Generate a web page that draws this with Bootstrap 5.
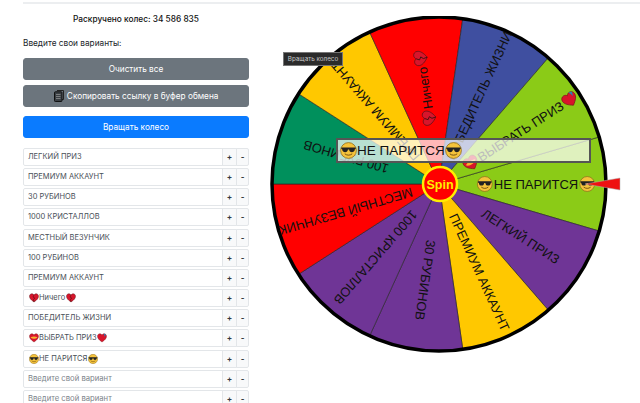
<!DOCTYPE html>
<html lang="ru">
<head>
    <meta charset="UTF-8">
    <meta name="viewport" content="width=device-width, initial-scale=1.0">
    <title>Колесо фортуны</title>
    <link href="https://cdn.jsdelivr.net/npm/bootstrap@5.3.0/dist/css/bootstrap.min.css" rel="stylesheet">
    <style>
        html, body { overflow: hidden; height: 403px; }
        body { font-family: Inter, "Liberation Sans", sans-serif; font-size: 8.25px; color: #212529; }
        .page-wrap { padding-left: 23px; }
        .top-rule { border-top: 2px solid #eceef0; margin-top: 2px; }
        .left-col { width: 226px; flex: none; }
        .spin-count { font-size: 8.3px; font-weight: 500; margin-top: 9px; height: 12px; line-height: 12px; color: #111; }
        .enter-label { margin-top: 12px; height: 12px; line-height: 12px; }
        .wide-btn { font-size: 8.25px; height: 22px; padding: 0; border-radius: 3px; line-height: 20px; display: block; }
        .wide-btn svg { vertical-align: -3px; margin-right: 1px; }
        .clear-btn { margin-top: 9px; }
        .copy-btn { margin-top: 5px; }
        .start-btn { margin-top: 9px; background: #0a7bff; border-color: #0a7bff; }
        .choice-list { margin-top: 10px; }
        .choice-row { height: 18px; margin-bottom: 2.17px; }
        .choice-row .form-control { font-size: 7.7px; height: 18px; min-height: 0; padding: 0 4px; border-radius: 2px 0 0 2px; border-color: #e3e6e9; border-width: 1px; color: #495057; }
        .choice-row .form-control::placeholder { color: #7d848b; }
        .choice-row .btn { font-size: 8px; font-weight: 700; padding: 0; line-height: 16px; background: #f8f9fa; border-color: #e3e6e9; color: #343a40; }
        .choice-row .plus-btn { width: 15px; }
        .choice-row .minus-btn { width: 13px; border-radius: 0 2px 2px 0; }
        .choice-box { position: relative; flex: 1 1 auto; min-width: 0; }
        .choice-label { position: absolute; left: 5px; top: 0; height: 18px; line-height: 18px; font-size: 7.5px; color: #495057; display: flex; align-items: center; pointer-events: none; }
        .choice-label svg { margin: 0 .5px; }
        .wheel-stage { position: relative; width: 352px; height: 345px; margin-left: 21px; margin-top: 12px; flex: none; }
        .wheel-stage svg.wheel-svg { display: block; }
        .wheel-text { font-family: "Liberation Sans", sans-serif; font-size: 13px; fill: #111; }
        .spin-text { font-family: "Liberation Sans", sans-serif; font-size: 12.5px; font-weight: 700; fill: #ffee00; }
        .result-box { position: absolute; left: 66px; top: 122px; width: 255px; height: 25px; border: 2px solid #555; background: rgba(255,255,255,.72); font-family: "Liberation Sans", sans-serif; font-size: 13.5px; line-height: 21px; color: #111; display: flex; align-items: center; padding-left: 2px; }
        .native-tip { position: absolute; left: 283px; top: 52px; width: 60px; height: 14px; background: #2b2b2b; border: 1px solid #767676; color: #c8c8c8; font-size: 6.3px; line-height: 12px; text-align: center; white-space: nowrap; }
    </style>
</head>
<body>
    <div class="page-wrap">
        <div class="top-rule"></div>
        <div class="d-flex">
            <div class="left-col">
                <div class="spin-count text-center">Раскручено колес: 34 586 835</div>
                <div class="enter-label">Введите свои варианты:</div>
                <button class="btn btn-secondary wide-btn w-100 clear-btn" type="button">Очистить все</button>
                <button class="btn btn-secondary wide-btn w-100 copy-btn" type="button">
                    <svg width="10" height="12" viewBox="0 0 10 12"><path d="M3 .5h6.500v9H8" fill="none" stroke="#222"/><rect x=".5" y="1.800" width="7.500" height="9.700" rx=".8" fill="#3a3f44" stroke="#111"/><path d="M2 4.500h4.500M2 6.500h4.500M2 8.500h4.500" stroke="#999" stroke-width=".7"/></svg>
                    Скопировать ссылку в буфер обмена</button>
                <button class="btn btn-primary wide-btn w-100 start-btn" type="button">Вращать колесо</button>
                <div id="choices" class="choice-list"></div>
            </div>
            <div class="wheel-stage">
                <svg class="wheel-svg" id="wheel" width="352" height="345" viewBox="0 0 352 345"></svg>
                <div class="result-box"><svg width="17" height="17" viewBox="0 0 20 20"><use href="#emoji-cool"/></svg>НЕ ПАРИТСЯ<svg width="17" height="17" viewBox="0 0 20 20"><use href="#emoji-cool"/></svg></div>
            </div>
        </div>
    </div>
    <div class="native-tip">Вращать колесо</div>

    <svg width="0" height="0" class="position-absolute">
        <defs>
            <g id="emoji-cool">
                <circle cx="10" cy="10" r="9.300" fill="#f5c33b" stroke="#8a6a1a" stroke-width=".9"/>
                <path d="M1.500 6.500h17v1.500l-1 .6c-.3 2.600-1.800 3.400-3.500 3.400-2 0-3-1.300-3.300-3.300h-1.400c-.3 2-1.300 3.300-3.300 3.300-1.700 0-3.200-.8-3.500-3.400l-1-.6z" fill="#222"/>
                <path d="M6 14.200c2.500 1.800 5.500 1.800 8 0" fill="none" stroke="#6b4a10" stroke-width="1.100" stroke-linecap="round"/>
            </g>
            <g id="emoji-broken">
                <path d="M10 18C4 14 1 10.500 1 6.500 1 3.500 3.200 1.500 5.800 1.500 7.500 1.500 9 2.400 10 4c1-1.600 2.500-2.500 4.200-2.500C16.800 1.500 19 3.500 19 6.500c0 4-3 7.500-9 11.500z" fill="#d8152b" stroke="#5a1118" stroke-width=".9"/>
                <path d="M10 4 8 8l3.500 2L9 13l1 5" fill="none" stroke="#40100f" stroke-width="1.100"/>
            </g>
            <g id="emoji-fire">
                <path d="M10 18C4 14 1 10.500 1 6.500 1 3.500 3.200 1.500 5.800 1.500 7.500 1.500 9 2.400 10 4c1-1.600 2.500-2.500 4.200-2.500C16.800 1.500 19 3.500 19 6.500c0 4-3 7.500-9 11.500z" fill="#d8152b" stroke="#7a1118" stroke-width=".8"/>
                <path d="M3 8.500c4-2 10-2 14 0-2 2.500-5 3-7 3s-5-.5-7-3z" fill="#f7b52c"/>
            </g>
            <g id="emoji-heart">
                <path d="M10 18C4 14 1 10.500 1 6.500 1 3.500 3.200 1.500 5.800 1.500 7.500 1.500 9 2.400 10 4c1-1.600 2.500-2.500 4.200-2.500C16.800 1.500 19 3.500 19 6.500c0 4-3 7.500-9 11.500z" fill="#d8152b" stroke="#7a1118" stroke-width=".8"/>
                <path d="M13 1.500c2-.4 3.500.3 4.500 1.500l-2 5c-.3-2.500-1.200-4.800-2.500-6.500z" fill="#2a7fb8"/>
            </g>
        </defs>
    </svg>

    <script>
        // вся разметка колеса и списка строится из одного массива
        const items = [
            { text: 'НЕ ПАРИТСЯ', color: '#8bcb17', icon: 'emoji-cool', icon2: 'emoji-cool' },
            { text: 'ЛЕГКИЙ ПРИЗ', color: '#6f3596' },
            { text: 'ПРЕМИУМ АККАУНТ', color: '#ffc800' },
            { text: '30 РУБИНОВ', color: '#6f3596' },
            { text: '1000 КРИСТАЛЛОВ', color: '#6f3596' },
            { text: 'МЕСТНЫЙ ВЕЗУНЧИК', color: '#ff0000' },
            { text: '100 РУБИНОВ', color: '#00905c' },
            { text: 'ПРЕМИУМ АККАУНТ', color: '#ffc800' },
            { text: 'Ничего', color: '#ff0000', icon: 'emoji-broken', icon2: 'emoji-broken' },
            { text: 'ПОБЕДИТЕЛЬ ЖИЗНИ', color: '#3f4fa0' },
            { text: 'ВЫБРАТЬ ПРИЗ', color: '#8bcb17', icon: 'emoji-fire', icon2: 'emoji-heart' }
        ];
        const listOrder = [1, 2, 3, 4, 5, 6, 7, 8, 9, 10, 0];

        const cx = 169, cy = 168, r = 167;
        const step = 360 / items.length;
        const svg = document.getElementById('wheel');
        const rad = d => d * Math.PI / 180;
        let out = '';

        items.forEach((it, i) => {
            const a0 = rad(i * step - step / 2), a1 = rad(i * step + step / 2);
            const x0 = cx + r * Math.cos(a0), y0 = cy + r * Math.sin(a0);
            const x1 = cx + r * Math.cos(a1), y1 = cy + r * Math.sin(a1);
            out += `<path d="M${cx} ${cy}L${x0} ${y0}A${r} ${r} 0 0 1 ${x1} ${y1}Z" fill="${it.color}" stroke="#222" stroke-width=".6"/>`;
        });
        out += `<circle cx="${cx}" cy="${cy}" r="${r}" fill="none" stroke="#000" stroke-width="3.500"/>`;

        items.forEach((it, i) => {
            out += `<g transform="translate(${cx} ${cy}) rotate(${i * step}) translate(97 0)" data-row="${i}"><text class="wheel-text" text-anchor="middle" y="4.500">${it.text}</text></g>`;
        });
        svg.innerHTML = out;

        // значки ставим по реальной ширине текста
        items.forEach((it, i) => {
            if (!it.icon) return;
            const g = svg.querySelector(`[data-row="${i}"]`);
            const w = g.querySelector('text').getComputedTextLength();
            g.innerHTML += `<use href="#${it.icon}" transform="translate(${-w / 2 - 17} -8) scale(.8)"/><use href="#${it.icon2}" transform="translate(${w / 2 + 1} -8) scale(.8)"/>`;
        });

        svg.insertAdjacentHTML('beforeend', `
            <polygon points="315,168 350,162 350,174" fill="#ee1111" stroke="#b0b0b0" stroke-width=".5"/>
            <circle cx="${cx + 1}" cy="${cy}" r="17" fill="#ff0000" stroke="#ffee00" stroke-width="2.500"/>
            <text class="spin-text" x="${cx + 1}" y="${cy + 4.5}" text-anchor="middle">Spin</text>`);

        const iconSvg = id => id ? `<svg width="10" height="10" viewBox="0 0 20 20"><use href="#${id}"/></svg>` : '';
        let rows = listOrder.map(n => {
            const it = items[n];
            const label = `${iconSvg(it.icon)}${it.text}${iconSvg(it.icon2)}`;
            return `<div class="input-group choice-row flex-nowrap"><div class="choice-box"><input class="form-control w-100" type="text"><span class="choice-label">${label}</span></div><button class="btn plus-btn" type="button">+</button><button class="btn minus-btn" type="button">-</button></div>`;
        }).join('');
        for (let i = 0; i < 2; i++) {
            rows += `<div class="input-group choice-row flex-nowrap"><div class="choice-box"><input class="form-control w-100" type="text" placeholder="Введите свой вариант"></div><button class="btn plus-btn" type="button">+</button><button class="btn minus-btn" type="button">-</button></div>`;
        }
        document.getElementById('choices').innerHTML = rows;
    </script>
</body>
</html>
